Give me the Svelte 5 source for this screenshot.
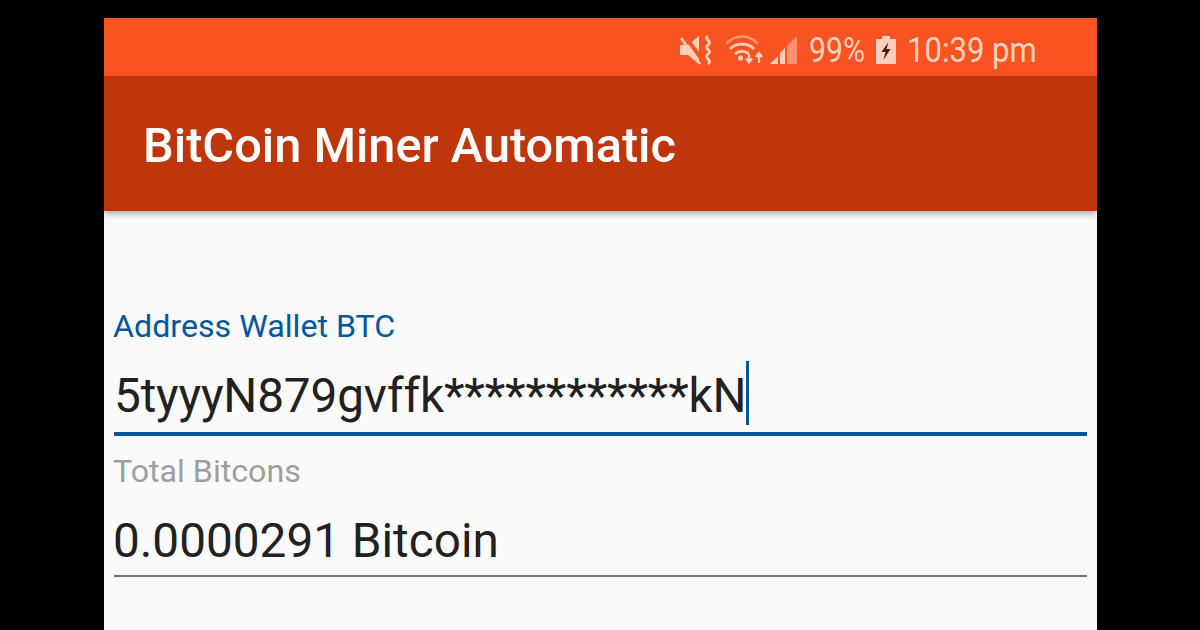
<script>
  const fields = [
    { label: 'Address Wallet BTC', value: '5tyyyN879gvffk************kN', active: true },
    { label: 'Total Bitcons', value: '0.0000291 Bitcoin', active: false }
  ];
</script>

<div class="backdrop">
  <div class="phone">
    <div class="status-bar">
      <svg class="icon-mute" width="33" height="30" viewBox="0 0 33 30">
        <path d="M0 10h8l11-9v28l-11-9H0z" fill="currentColor"/>
        <path d="M4 0l20 27" stroke="#f85321" stroke-width="4"/>
        <path d="M1 3l19 26" stroke="currentColor" stroke-width="2.500"/>
        <path d="M28 1c-5 3.500 5 5 0 9s5 5 0 9 5 6 0 10" fill="none" stroke="currentColor" stroke-width="2.800"/>
      </svg>
      <svg class="icon-wifi" width="41" height="30" viewBox="0 0 41 30">
        <path d="M1 9c9-10 23-10 32 0" fill="none" stroke="currentColor" stroke-width="2.400" opacity="0.55"/>
        <path d="M5 14c6-6.500 18-6.500 24 0" fill="none" stroke="currentColor" stroke-width="2.800"/>
        <path d="M10 19c4-3.500 10-3.500 14 0" fill="none" stroke="currentColor" stroke-width="2.800"/>
        <circle cx="15.500" cy="23" r="2.600" fill="currentColor"/>
        <path d="M24 19v8M21 23.500l3 4 3-4" fill="none" stroke="currentColor" stroke-width="2.200"/>
        <path d="M34 28v-9M31 22l3-4 3 4" fill="none" stroke="currentColor" stroke-width="2.200"/>
      </svg>
      <svg class="icon-signal" width="27" height="30" viewBox="0 0 27 30">
        <path d="M0 29l8-8v8z" fill="currentColor"/>
        <path d="M10 29V18l5-5v16z" fill="currentColor"/>
        <path d="M17 29V11L27 1v28z" fill="currentColor" opacity="0.5"/>
      </svg>
      <span class="percent">99%</span>
      <svg class="icon-battery" width="20" height="28" viewBox="0 0 20 28">
        <path d="M6 0h8v3h6v25H0V3h6z" fill="currentColor"/>
        <path d="M12.500 6l-7 10h4l-2 8 7-11h-4z" fill="#4a1c0c"/>
      </svg>
      <span class="clock">10:39 pm</span>
    </div>

    <header class="app-bar">
      <h1>BitCoin Miner Automatic</h1>
    </header>

    <main class="form">
      {#each fields as field}
        <div class="field" class:active={field.active}>
          <span class="label">{field.label}</span>
          <div class="value">
            <span>{field.value}</span>
            {#if field.active}<i class="caret"></i>{/if}
          </div>
        </div>
      {/each}
    </main>
  </div>
</div>

<style>
  :global(body) {
    margin: 0;
    background: #000;
  }

  .backdrop {
    width: 1200px;
    height: 630px;
    overflow: hidden;
    background: #000;
    padding-top: 18px;
    box-sizing: border-box;
  }

  .phone {
    width: 993px;
    height: 612px;
    margin-left: 104px;
    background: #fafafa;
    font-family: Roboto, "Liberation Sans", sans-serif;
    overflow: hidden;
  }

  .status-bar {
    height: 58px;
    display: flex;
    align-items: center;
    justify-content: flex-end;
    padding: 6px 62px 0 0;
    box-sizing: border-box;
    background: #f85321;
    color: #fdd0bd;
    font-size: 35.500px;
  }

  .icon-mute {
    margin-right: 12px;
  }

  .icon-signal {
    margin: 0 12px 0 4px;
  }

  .icon-battery {
    margin: 0 11px 0 12px;
  }

  .percent, .clock {
    display: inline-block;
    line-height: 50px;
    white-space: nowrap;
    transform-origin: left center;
  }

  .percent {
    width: 55px;
    transform: scaleX(0.85);
  }

  .clock {
    width: 128px;
    transform: scaleX(0.875);
  }

  .app-bar {
    height: 135px;
    display: flex;
    align-items: center;
    padding: 4px 0 0 39px;
    box-sizing: border-box;
    background: #c0360c;
    box-shadow: 0 3px 6px rgba(0, 0, 0, 0.3);
    position: relative;
  }

  h1 {
    margin: 0;
    color: #fff;
    font-size: 48.700px;
    font-weight: 500;
  }

  .form {
    display: flex;
    flex-direction: column;
    padding: 97px 10px 0;
  }

  .field {
    display: flex;
    flex-direction: column;
    border-bottom: 2px solid #757575;
    height: 122px;
    box-sizing: content-box;
  }

  .field.active {
    border-bottom: 4px solid #01579b;
    height: 124px;
    margin-bottom: 17px;
  }

  .label {
    margin-left: -1px;
    font-size: 32.200px;
    line-height: 36px;
    color: #9e9e9e;
  }

  .active .label {
    color: #01579b;
  }

  .value {
    display: flex;
    align-items: center;
    margin: 25px 0 0 -1px;
    height: 54px;
    font-size: 47.700px;
    line-height: 54px;
    color: #212121;
  }

  .active .value {
    margin-left: 0;
    letter-spacing: -0.150px;
  }

  .caret {
    width: 3px;
    height: 64px;
    margin: -6px 0 0 0;
    background: #01579b;
  }
</style>
